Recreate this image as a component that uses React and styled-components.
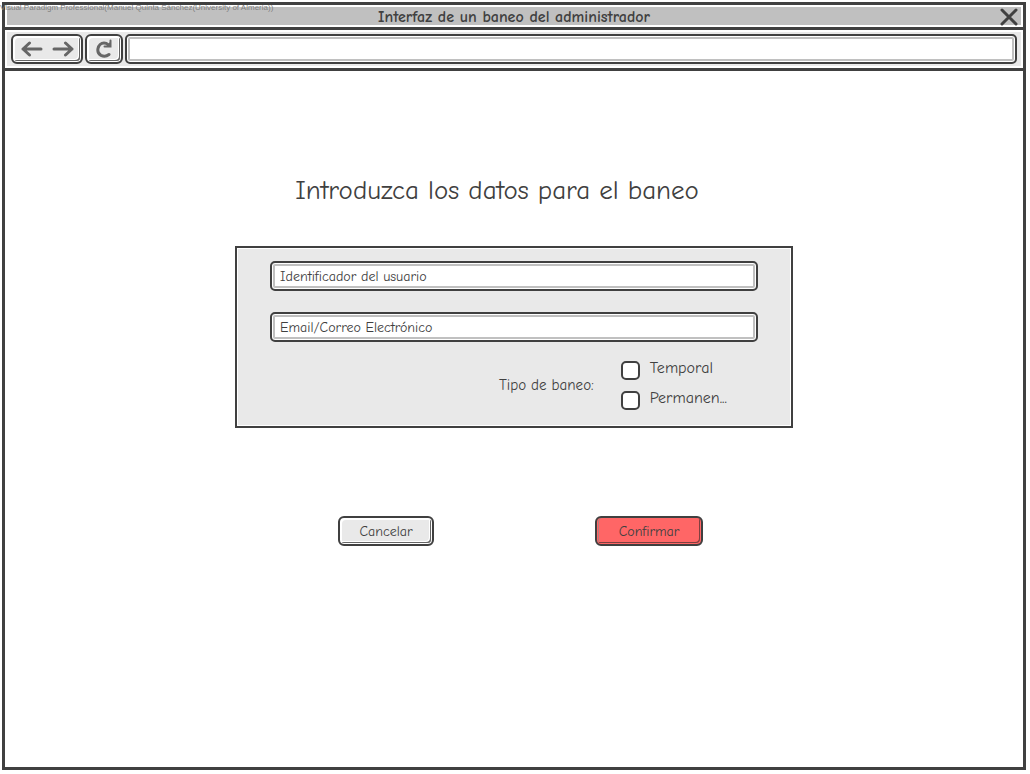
import React from "react";
import styled, { createGlobalStyle } from "styled-components";

const ink = "#404040";
const panel = "#e9e9e9";
const silver = "#c0c0c0";
const hand = `"Comic Sans MS", "Comic Neue", "Open Sans", "Noto Sans", sans-serif`;

const GlobalStyle = createGlobalStyle`
  *, *::before, *::after { box-sizing: border-box; }
  body { margin: 0; background: #fff; color: ${ink}; font-family: ${hand}; font-variant-ligatures: none; }
  button, input { font-family: inherit; font-variant-ligatures: none; color: inherit; }
`;

const Page = styled.div`
  display: flex;
  min-height: 100vh;
  padding: 2px 4px 4px 2px;
`;

const Watermark = styled.div`
  position: absolute;
  top: 3px;
  left: 0;
  font: 8px/10px "Liberation Sans", Arial, sans-serif;
  color: #808080;
  white-space: nowrap;
`;

const BrowserWindow = styled.div`
  flex: 1;
  min-width: 0;
  display: flex;
  flex-direction: column;
  border: 3px solid ${ink};
`;

const TitleBar = styled.header`
  display: grid;
  grid-template-columns: 24px 1fr 24px;
  align-items: center;
  height: 22px;
  border: 2px solid #fff;
  background: ${silver};
`;

const WindowTitle = styled.div`
  font-size: 16px;
  line-height: 20px;
  font-weight: 700;
  text-align: center;
`;

const CloseButton = styled.button`
  display: flex;
  justify-content: center;
  align-items: center;
  height: 18px;
  padding: 0;
  border: 0;
  background: none;
`;

const ToolbarFrame = styled.div`
  border: solid ${ink};
  border-width: 3px 0;
`;

const Toolbar = styled.nav`
  display: flex;
  gap: 2px;
  padding: 2px 4px;
  border: 2px solid #fff;
  background: ${panel};
`;

const bevel = `
  border: 2px solid ${ink};
  border-radius: 6px;
  box-shadow: inset 0 0 0 1px #fff, inset -2px -2px 0 #666, inset 2px 2px 0 #fff, inset -3px -3px 0 #fff;
`;

const ArrowGroup = styled.div`
  flex: none;
  display: flex;
  width: 72px;
  height: 30px;
  padding: 0 3px;
  background: ${panel};
  ${bevel}
`;

const IconButton = styled.button`
  flex: 1;
  display: flex;
  align-items: center;
  justify-content: center;
  padding: 0;
  border: 0;
  background: none;
`;

const ReloadButton = styled.button`
  flex: none;
  display: flex;
  align-items: center;
  justify-content: center;
  width: 38px;
  height: 30px;
  padding: 0;
  background: ${panel};
  ${bevel}
`;

const TextField = styled.input`
  display: block;
  width: 100%;
  min-width: 0;
  height: 30px;
  padding: 0 8px;
  border: 2px solid ${ink};
  border-radius: 5px;
  background: #fff;
  box-shadow: inset 0 0 0 1px #fff, inset 0 0 0 3px ${silver};
  font-size: 14px;
  line-height: 18px;
  outline: 0;
  &::placeholder { color: ${ink}; opacity: 1; }
`;

const Content = styled.main`
  display: flex;
  flex-direction: column;
  align-items: center;
  padding: 100px 16px 32px;
`;

const Heading = styled.h1`
  margin: 0;
  padding-right: 34px;
  font-size: 27px;
  line-height: 40px;
  font-weight: 400;
`;

const Form = styled.form`
  width: 100%;
  max-width: 558px;
  margin-top: 35px;
`;

const Panel = styled.div`
  display: flex;
  flex-direction: column;
  gap: 18px;
  padding: 13px 33px 16px;
  border: 2px solid ${ink};
  outline: 1px solid #fff;
  outline-offset: -3px;
  background: ${panel};
`;

const Fields = styled.div`
  display: flex;
  flex-direction: column;
  gap: 21px;
`;

const BanType = styled.fieldset`
  display: flex;
  justify-content: flex-end;
  align-items: center;
  gap: 27px;
  margin: 0;
  padding: 0 31px 0 0;
  border: 0;
`;

const GroupLabel = styled.span`
  font-size: 15px;
  line-height: 18px;
`;

const Options = styled.div`
  display: flex;
  flex-direction: column;
  gap: 10px;
`;

const Option = styled.label`
  display: flex;
  align-items: flex-start;
  gap: 10px;
  height: 20px;
  font-size: 16px;
  line-height: 16px;
`;

const Checkbox = styled.input`
  appearance: none;
  width: 19px;
  height: 19px;
  margin: 1px 0 0;
  border: 2px solid ${ink};
  border-radius: 5px;
  background: #fff;
  &:checked { background: ${ink}; box-shadow: inset 0 0 0 3px #fff; }
`;

const Actions = styled.div`
  display: flex;
  gap: 161px;
  margin-top: 88px;
  padding-left: 103px;
`;

const ActionButton = styled.button`
  width: ${(p) => (p.$danger ? 108 : 96)}px;
  height: 30px;
  padding: 2px 0 0;
  background: ${(p) => (p.$danger ? "#ff6666" : panel)};
  font-size: 14px;
  line-height: 18px;
  ${bevel}
  ${(p) => p.$danger && `box-shadow: inset 1px 0 0 #ff6666, inset -1px -1px 0 #ff6666, inset -2px -2px 0 #804040, inset 2px 0 0 #b08080;`}
`;

const Arrow = ({ flip }) => (
  <svg width="22" height="16" viewBox="0 0 22 16" fill="none" stroke="#666" strokeWidth="3" strokeLinecap="round" strokeLinejoin="round">
    <path d={flip ? "M2 8H20M13.500 2L20 8L13.500 14" : "M20 8H2M8.500 2L2 8L8.500 14"} />
  </svg>
);

export default function App() {
  return (
    <Page>
      <GlobalStyle />
      <BrowserWindow>
        <TitleBar>
          <span />
          <WindowTitle>Interfaz de un baneo del administrador</WindowTitle>
          <CloseButton aria-label="Cerrar">
            <svg width="18" height="18" viewBox="0 0 18 18" fill="none" stroke={ink} strokeWidth="3" strokeLinecap="round">
              <path d="M2 2L16 16M16 2L2 16" />
            </svg>
          </CloseButton>
        </TitleBar>
        <ToolbarFrame>
          <Toolbar>
            <ArrowGroup>
              <IconButton aria-label="Atrás"><Arrow /></IconButton>
              <IconButton aria-label="Adelante"><Arrow flip /></IconButton>
            </ArrowGroup>
            <ReloadButton aria-label="Recargar">
              <svg width="18" height="20" viewBox="0 0 18 20" fill="none" stroke="#666" strokeWidth="3" strokeLinecap="round">
                <path d="M14 15.500C12 17 8.500 17.500 6 16.300C3.500 15 2.500 12 3 9.500C3.600 6.500 6 4 9 4C10.500 4 12 4.500 13 5.500" />
                <path d="M15.500 1.500V7.500H9.500" strokeWidth="2" />
                <path d="M15 3V7.500H11Z" fill="#666" stroke="none" />
              </svg>
            </ReloadButton>
            <TextField aria-label="Dirección" />
          </Toolbar>
        </ToolbarFrame>
        <Content>
          <Heading>Introduzca los datos para el baneo</Heading>
          <Form onSubmit={(e) => e.preventDefault()}>
            <Panel>
              <Fields>
                <TextField aria-label="Identificador del usuario" placeholder="Identificador del usuario" />
                <TextField aria-label="Email/Correo Electrónico" placeholder="Email/Correo Electrónico" />
              </Fields>
              <BanType aria-labelledby="ban-type">
                <GroupLabel id="ban-type">Tipo de baneo:</GroupLabel>
                <Options>
                  <Option><Checkbox type="checkbox" />Temporal</Option>
                  <Option><Checkbox type="checkbox" />Permanen...</Option>
                </Options>
              </BanType>
            </Panel>
            <Actions>
              <ActionButton type="button">Cancelar</ActionButton>
              <ActionButton type="submit" $danger>Confirmar</ActionButton>
            </Actions>
          </Form>
        </Content>
      </BrowserWindow>
      <Watermark>Visual Paradigm Professional(Manuel Quinta Sánchez(University of Almeria))</Watermark>
    </Page>
  );
}
